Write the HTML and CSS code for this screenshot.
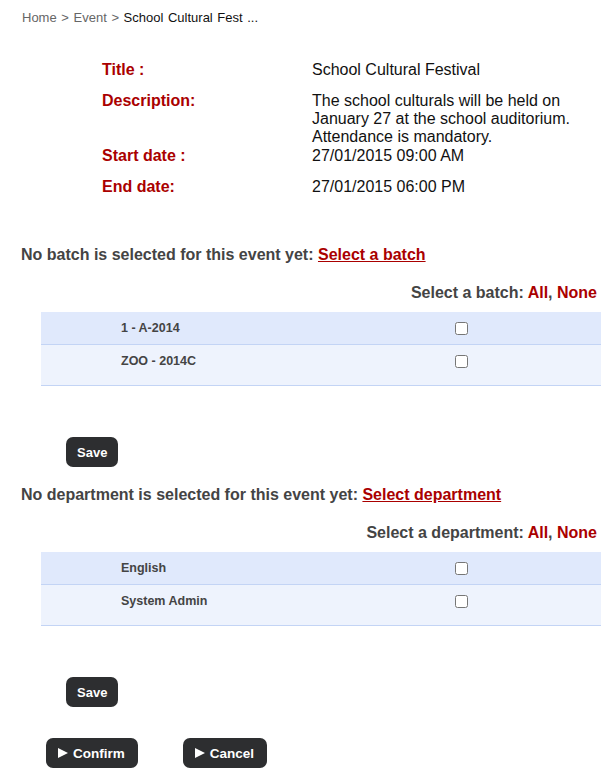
FILE: index.html
```html
<!DOCTYPE html>
<html lang="en">
<head>
    <meta charset="UTF-8">
    <meta name="viewport" content="width=device-width, initial-scale=1.0">
    <title>Event</title>
    <link rel="stylesheet" href="styles.css">
</head>
<body>
<div class="breadcrumb">
    <a href="#">Home</a> &gt; <a href="#">Event</a> &gt; <span class="current">School Cultural Fest ...</span>
</div>

<table class="details">
    <tr>
        <td class="label">Title :</td>
        <td class="value">School Cultural Festival</td>
    </tr>
    <tr>
        <td class="label">Description:</td>
        <td class="value">The school culturals will be held on January 27 at the school auditorium. Attendance is mandatory.</td>
    </tr>
    <tr>
        <td class="label">Start date :</td>
        <td class="value">27/01/2015 09:00 AM</td>
    </tr>
    <tr>
        <td class="label">End date:</td>
        <td class="value">27/01/2015 06:00 PM</td>
    </tr>
</table>

<div class="section">
    <p class="notice">No batch is selected for this event yet: <a href="#">Select a batch</a></p>
    <p class="select-all">Select a batch: <a href="#">All</a>, <a href="#">None</a></p>
    <div class="list">
        <div class="row first">
            <span class="name">1 - A-2014</span>
            <input type="checkbox">
        </div>
        <div class="row">
            <span class="name">ZOO - 2014C</span>
            <input type="checkbox">
        </div>
    </div>
    <button class="btn save">Save</button>
</div>

<div class="section">
    <p class="notice">No department is selected for this event yet: <a href="#">Select department</a></p>
    <p class="select-all">Select a department: <a href="#">All</a>, <a href="#">None</a></p>
    <div class="list">
        <div class="row first">
            <span class="name">English</span>
            <input type="checkbox">
        </div>
        <div class="row">
            <span class="name">System Admin</span>
            <input type="checkbox">
        </div>
    </div>
    <button class="btn save">Save</button>
</div>

<div class="actions">
    <button class="btn"><span class="arrow"></span>Confirm</button>
    <button class="btn"><span class="arrow"></span>Cancel</button>
</div>
</body>
</html>
```

FILE: styles.css
```css
body {
    font-family: Arial, "Liberation Sans", sans-serif;
    margin: 0;
    padding: 0 9px 0 21px;
    background-color: #fff;
    color: #222;
}

.breadcrumb {
    font-size: 13px;
    color: #666;
    padding-top: 10px;
    padding-left: 1px;
    word-spacing: 1px;
}

.breadcrumb a {
    color: #666;
    text-decoration: none;
}

.breadcrumb .current {
    color: #111;
}

.details {
    border-collapse: collapse;
    margin: 36px 0 0 79px;
    width: 480px;
}

.details td {
    vertical-align: top;
    padding: 0 0 13px;
    font-size: 16px;
    line-height: 18px;
}

.details .label {
    width: 210px;
    color: #a00;
    font-weight: bold;
    font-size: 16px;
    padding-left: 2px;
}

.details .value {
    color: #111;
}

.details tr:nth-child(2) td {
    padding-bottom: 1px;
}

.details + .section {
    margin-top: 37px;
}

.notice {
    font-size: 16px;
    font-weight: bold;
    color: #444;
    margin: 0;
}

.notice a,
.select-all a {
    color: #a00;
}

.select-all a {
    text-decoration: none;
}

.select-all {
    font-size: 16px;
    font-weight: bold;
    color: #444;
    text-align: right;
    margin: 20px 4px 0 0;
}

.list {
    margin: 10px 0 0 20px;
}

.row {
    display: flex;
    align-items: flex-start;
    height: 40px;
    background-color: #eef3fd;
    border-bottom: 1px solid #c3d4f5;
}

.row.first {
    height: 32px;
    background-color: #e0e9fc;
}

.row .name {
    width: 334px;
    padding: 9px 0 0 80px;
    font-size: 12.5px;
    font-weight: bold;
    color: #444;
}

.row input {
    margin: 10px 0 0 0;
    width: 13px;
    height: 13px;
}

.btn {
    background-color: #2d2e30;
    color: #fff;
    font-family: Arial, "Liberation Sans", sans-serif;
    font-weight: bold;
    font-size: 13px;
    border: none;
    border-radius: 7px;
    height: 30px;
    padding: 0 11px;
    cursor: pointer;
}

.save {
    display: block;
    margin: 51px 0 19px 45px;
}

.actions {
    display: flex;
    gap: 45px;
    margin: 31px 0 0 25px;
}

.actions .btn {
    display: flex;
    align-items: center;
    padding: 0 13px 0 12px;
    font-size: 13.5px;
}

.arrow {
    display: inline-block;
    width: 0;
    height: 0;
    border-left: 10px solid #fff;
    border-top: 5px solid transparent;
    border-bottom: 5px solid transparent;
    margin-right: 5px;
}
```
